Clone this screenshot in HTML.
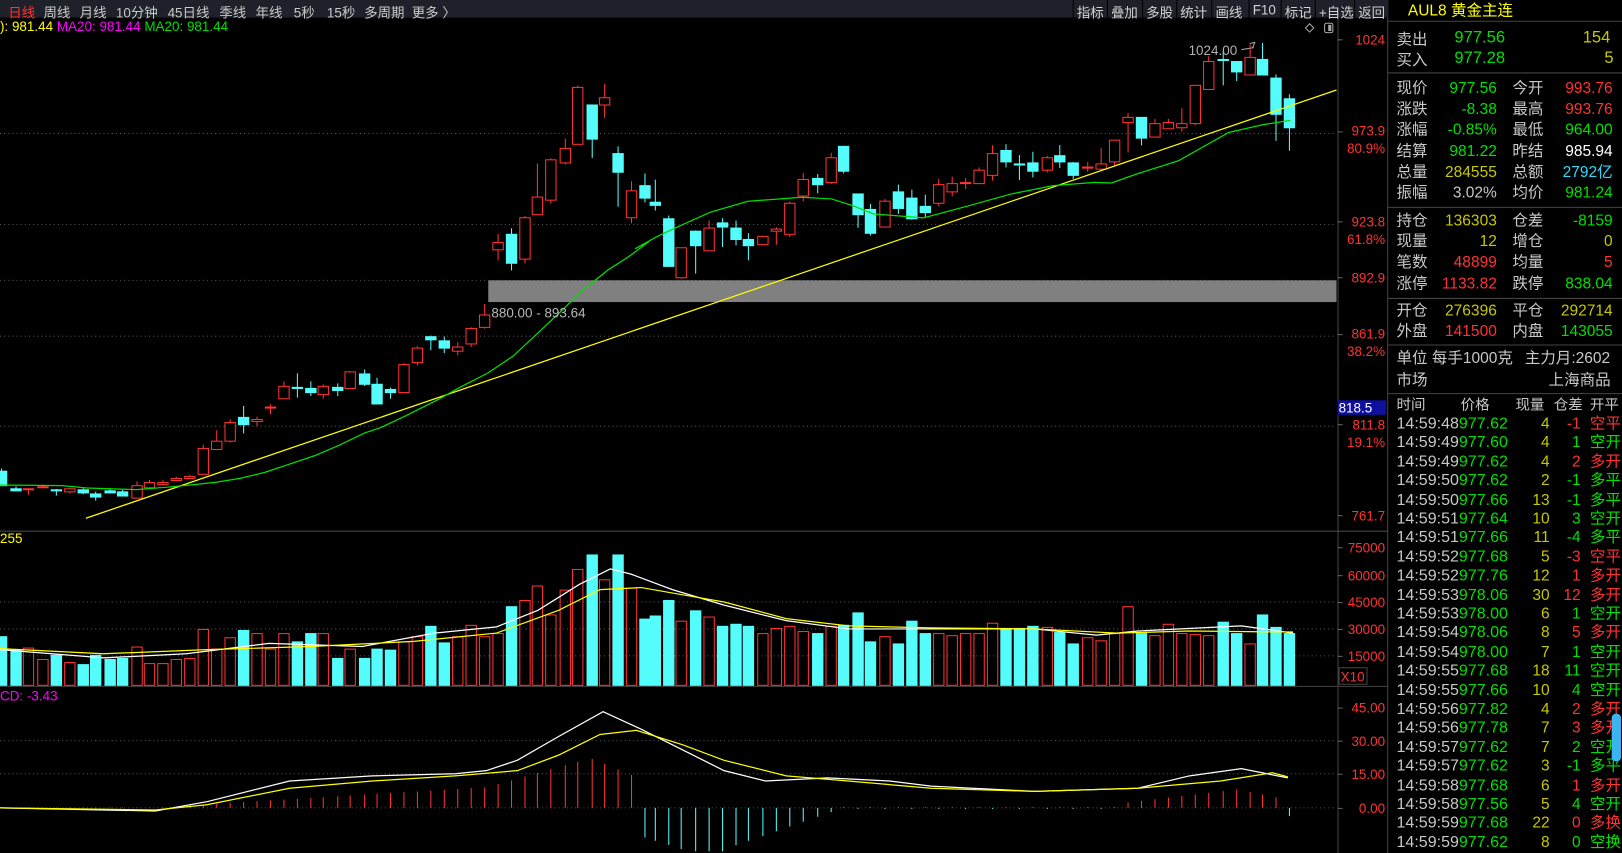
<!DOCTYPE html>
<html><head><meta charset="utf-8">
<style>
*{margin:0;padding:0;box-sizing:border-box}
body{width:1622px;height:853px;background:#000;overflow:hidden;position:relative;font-family:"Liberation Sans","Noto Sans CJK SC",sans-serif;color:#c8c8c8}
#root{position:absolute;left:0;top:0;width:1568px;height:825px;transform:scale(1.03444);transform-origin:0 0}
.t{position:absolute;white-space:nowrap;line-height:1}
#top{position:absolute;left:0;top:0;width:1342px;height:17px;background:#1e2129}
.tb{position:absolute;top:2px;font-size:13px;color:#c8c8c8;white-space:nowrap}
.btn{position:absolute;top:0;height:17px;font-size:13px;color:#d0d0d0;padding:2px 3px 0;border-left:1px solid #000}
.rp{font-size:15px}
.l{color:#c8c8c8}
.r{color:#ff3232}.g{color:#00e000}.y{color:#c8c800}.w{color:#fff}.c{color:#2fd8f8}
.ax{position:absolute;font-size:13px;color:#ff3232;text-align:right;width:46px;left:1293px;line-height:1}
</style></head><body>
<div id="root">
<svg id="s" width="1568" height="825" style="position:absolute;left:0;top:0"></svg>

<div id="top">
<div class="tb" style="left:8px;color:#ff3232">日线</div>
<div class="tb" style="left:42px">周线</div>
<div class="tb" style="left:77px">月线</div>
<div class="tb" style="left:112px">10分钟</div>
<div class="tb" style="left:162px">45日线</div>
<div class="tb" style="left:212px">季线</div>
<div class="tb" style="left:247px">年线</div>
<div class="tb" style="left:284px">5秒</div>
<div class="tb" style="left:316px">15秒</div>
<div class="tb" style="left:352px">多周期</div>
<div class="tb" style="left:398px">更多 〉</div>
<div class="btn" style="left:1037px">指标</div>
<div class="btn" style="left:1070px">叠加</div>
<div class="btn" style="left:1104px">多股</div>
<div class="btn" style="left:1137px">统计</div>
<div class="btn" style="left:1171px">画线</div>
<div class="btn" style="left:1207px">F10</div>
<div class="btn" style="left:1238px">标记</div>
<div class="btn" style="left:1271px">+自选</div>
<div class="btn" style="left:1309px">返回</div>
</div>
<div class="t" style="left:1361px;top:3px;font-size:15px;color:#ffff00">AUL8 黄金主连</div>

<div class="t" style="left:0;top:19px;font-size:13px"><span style="color:#ffff00">): 981.44</span> <span style="color:#ff00ff">MA20: 981.44</span> <span style="color:#00e000">MA20: 981.44</span></div>
<div class="t" style="left:1149px;top:42px;font-size:13px;color:#b0b0b0">1024.00</div>
<div class="t" style="left:475px;top:296px;font-size:13px;color:#b8b8b8">880.00 - 893.64</div>
<div class="t" style="left:0;top:514px;font-size:13px;color:#ffff00">255</div>
<div class="t" style="left:0;top:666px;font-size:13px;color:#ff00ff">CD: -3.43</div>

<div class="ax" style="top:32px">1024</div>
<div class="ax" style="top:120px">973.9</div>
<div class="ax" style="top:137px">80.9%</div>
<div class="ax" style="top:208px">923.8</div>
<div class="ax" style="top:225px">61.8%</div>
<div class="ax" style="top:262px">892.9</div>
<div class="ax" style="top:316px">861.9</div>
<div class="ax" style="top:333px">38.2%</div>
<div class="t" style="left:1293px;top:387px;width:47px;height:14px;background:#1010a0;color:#fff;font-size:13px;padding:1px 0 0 1px">818.5</div>
<div class="ax" style="top:404px">811.8</div>
<div class="ax" style="top:421px">19.1%</div>
<div class="ax" style="top:492px">761.7</div>
<div class="ax" style="top:523px">75000</div>
<div class="ax" style="top:550px">60000</div>
<div class="ax" style="top:576px">45000</div>
<div class="ax" style="top:602px">30000</div>
<div class="ax" style="top:628px">15000</div>
<div class="t" style="left:1294px;top:645px;width:28px;height:17px;border:1px solid #444;color:#ff3232;font-size:13px;padding:2px 0 0 1px">X10</div>
<div class="ax" style="top:678px">45.00</div>
<div class="ax" style="top:710px">30.00</div>
<div class="ax" style="top:742px">15.00</div>
<div class="ax" style="top:775px">0.00</div>

<div class="rp">
<div class="t l" style="left:1350px;top:31px">卖出</div><div class="t g" style="left:1406px;top:29px;font-size:16px">977.56</div><div class="t y" style="left:1530px;top:29px;font-size:16px">154</div>
<div class="t l" style="left:1350px;top:51px">买入</div><div class="t g" style="left:1406px;top:49px;font-size:16px">977.28</div><div class="t y" style="left:1551px;top:49px;font-size:16px">5</div>
</div>
<div class="rp" id="tbl"></div>
<div style="position:absolute;left:1558px;top:690px;width:9px;height:46px;border-radius:4px;background:#3cb4f0"></div>
</div>

<script>
const S=document.getElementById('s');let h='';
function L(x1,y1,x2,y2,c,d){h+=`<line x1="${x1}" y1="${y1}" x2="${x2}" y2="${y2}" stroke="${c}" stroke-width="1" ${d?'stroke-dasharray="1 3"':''}/>`}
function P(pts,c){h+=`<polyline fill="none" stroke="${c}" stroke-width="1.2" points="${pts.map(p=>p.join(',')).join(' ')}"/>`}
[129,217,271,325,412].forEach(y=>L(0,y,1290,y,'#555',1));
[582,608,634].forEach(y=>L(0,y,1290,y,'#555',1));
[716,748,781].forEach(y=>L(0,y,1290,y,'#555',1));
L(0,513.5,1342,513.5,'#444');L(0,663.5,1342,663.5,'#444');
L(1293.5,17,1293.5,853,'#444');L(1341.5,0,1341.5,853,'#444');
[38,127,214,268,323,410,498,529,556,582,608,634,684,716,748,781].forEach(y=>L(1293,y+0.5,1298,y+0.5,'#666'));
h+='<rect x="472" y="271" width="820" height="21" fill="#808080"/>';
h+='<path d="M1266 23 L1270 27 L1266 31 L1262 27Z" fill="none" stroke="#aaa"/>';
h+='<rect x="1280.5" y="22.5" width="8" height="9" rx="1.5" fill="none" stroke="#aaa"/><rect x="1284" y="24" width="3" height="6" fill="#aaa"/>';
h+='<path d="M1200 48 L1212 46 M1208 42 L1213 41 L1211 46" fill="none" stroke="#aaa"/>';
const A=[[3,1235,1278,1228,1278,'c'],[37,1288,1295,1282,1297,'c'],[68,1289,1292,1289,1307,'r'],[102,1281,1286,1276,1288,'r'],[134,1290,1295,1290,1310,'c'],[167,1288,1297,1288,1303,'r'],[199,1290,1300,1288,1306,'c'],[231,1302,1312,1298,1325,'c'],[264,1293,1300,1288,1303,'c'],[296,1296,1310,1293,1312,'c'],[329,1279,1315,1267,1315,'r'],[361,1270,1285,1263,1287,'r'],[393,1270,1274,1262,1276,'r'],[426,1258,1264,1254,1266,'r'],[457,1249,1258,1247,1260,'r'],[490,1165,1243,1157,1245,'r'],[522,1144,1168,1113,1170,'r'],[556,1087,1145,1080,1150,'r'],[588,1072,1094,1040,1123,'c'],[619,1080,1084,1072,1102,'r'],[652,1042,1046,1035,1065,'r'],[684,979,1018,966,1020,'r'],[717,982,984,942,1015,'c'],[749,985,998,966,1010,'c'],[781,979,1005,975,1018,'r'],[814,982,991,972,1010,'c'],[846,937,985,935,987,'r'],[879,942,973,930,980,'c'],[911,972,1033,955,1033,'c'],[942,990,997,985,1018,'c'],[976,913,997,911,999,'r'],[1007,865,907,860,918,'r'],[1041,831,838,828,872,'c'],[1073,841,865,831,881,'c'],[1104,862,873,848,887,'r'],[1137,805,853,803,863,'r'],[1169,764,801,733,807,'r'],[1202,545,568,522,602,'r'],[1234,522,610,505,632,'c'],[1267,472,595,468,610,'r'],[1298,409,463,310,463,'r'],[1330,296,418,294,431,'r'],[1364,263,307,235,313,'r'],[1395,79,250,75,250,'r'],[1429,132,236,132,293,'c'],[1460,109,132,70,173,'r'],[1492,280,335,258,440,'c'],[1526,392,472,363,490,'r'],[1557,375,412,340,427,'c']];
const B=[[47,513,524,447,540,'c'],[78,564,706,555,708,'c'],[110,651,740,651,745,'r'],[143,602,645,600,730,'c'],[175,592,659,570,662,'r'],[208,576,587,563,650,'c'],[240,591,626,570,645,'c'],[271,627,644,608,690,'c'],[304,616,640,616,645,'r'],[336,594,602,590,643,'r'],[369,516,610,513,620,'r'],[401,444,494,427,512,'r'],[435,441,461,430,488,'c'],[467,378,455,366,460,'r'],[498,345,419,345,428,'c'],[532,489,551,489,592,'c'],[563,534,608,520,615,'c'],[597,511,589,505,591,'r'],[628,483,533,462,550,'c'],[660,501,562,477,568,'c'],[693,525,545,492,560,'c'],[725,460,518,444,527,'r'],[758,457,482,438,497,'r'],[790,454,458,442,475,'r'],[821,418,458,410,460,'r'],[855,367,431,343,450,'r'],[886,357,392,340,410,'c'],[919,397,401,373,448,'c'],[951,396,419,363,440,'c'],[986,378,416,375,425,'r'],[1016,372,392,343,412,'c'],[1047,396,431,394,445,'c'],[1081,406,410,394,423,'r'],[1113,397,415,351,418,'r'],[1147,327,392,327,405,'r'],[1178,259,274,246,365,'r'],[1211,258,320,258,344,'c'],[1243,277,318,264,320,'r'],[1275,273,292,264,294,'r'],[1308,277,290,232,302,'r'],[1340,162,277,162,283,'r'],[1371,90,173,75,176,'r'],[1405,84,87,60,163,'c'],[1437,90,120,90,150,'c'],[1470,78,131,40,131,'r'],[1500,84,129,35,133,'c'],[1533,141,248,130,330,'c'],[1565,201,290,190,360,'c']];
const C=[];
A.forEach(a=>C.push([a[0]*0.4,a[1]*0.321+58.6,a[2]*0.321+58.6,a[3]*0.321+58.6,a[4]*0.321+58.6,a[5]]));
B.forEach(a=>C.push([a[0]*0.404+614,a[1]*0.321+30.2,a[2]*0.321+30.2,a[3]*0.321+30.2,a[4]*0.321+30.2,a[5]]));
const R='#ff3232',CY='#54fcfc';
C.forEach(c=>{let x=Math.round(c[0]),col=c[5]=='r'?R:CY;let t=Math.round(c[1]),b=Math.round(c[2]);if(b-t<1)b=t+1;
 L(x+0.5,c[3],x+0.5,c[4],col);
 if(c[5]=='r'){h+=`<rect x="${x-4.5}" y="${t+0.5}" width="10" height="${b-t}" fill="#000" stroke="${R}"/>`}
 else h+=`<rect x="${x-5}" y="${t}" width="11" height="${b-t+1}" fill="${CY}"/>`});
P([[83,501],[1292,87]],'#ffff00');
const G7=[[0,1278],[150,1280],[210,1287],[330,1292],[400,1285],[460,1278],[520,1270],[580,1258],[640,1240],[700,1215],[760,1190],[820,1158],[880,1122],[920,1105],[980,1070],[1060,1020],[1110,985],[1180,940],[1240,890],[1300,820],[1360,750],[1400,700],[1440,660],[1470,630],[1520,590],[1568,545]].map(p=>[p[0]*0.4,p[1]*0.321+58.6]);
const G8=[[0,655],[50,620],[100,590],[180,545],[270,512],[400,500],[470,505],[520,525],[570,550],[690,562],[800,525],[900,490],[1000,465],[1100,455],[1140,457],[1200,430],[1300,390],[1420,305],[1500,282],[1568,268]].map(p=>[p[0]*0.404+614,p[1]*0.321+30.2]);
P(G7.concat(G8),'#00e000');
const V=[615,628,626,637,633,640,642,633,637,636,625,641,641,637,636,608,627,616,609,612,627,612,620,612,612,636,627,636,627,628,620,615,605,621,615,604,615,612,586,580,566,594,570,550,536,560,536,568,598,595,580,600,590,596,605,603,605,612,607,605,610,612,605,604,592,620,615,622,600,612,612,614,612,612,602,607,607,605,606,611,622,616,619,612,586,612,614,603,612,613,614,601,612,622,594,606,612];
C.forEach((c,i)=>{let x=Math.round(c[0]),t=V[i]||615;if(c[5]=='r')h+=`<rect x="${x-4.5}" y="${t+0.5}" width="10" height="${662-t}" fill="none" stroke="${R}"/>`;else h+=`<rect x="${x-5}" y="${t}" width="11" height="${663-t}" fill="${CY}"/>`});
P([[0,628],[100,636],[180,632],[260,622],[350,625],[420,612],[480,606],[520,590],[560,565],[590,550],[610,555],[650,570],[700,585],[760,600],[820,608],[900,608],[1000,608],[1060,614],[1100,610],[1200,605],[1250,612]],'#ffffff');
P([[0,627],[100,632],[200,628],[300,625],[400,620],[480,612],[540,590],[580,570],[620,568],[660,575],[700,582],[760,598],[820,605],[900,607],[1000,608],[1080,612],[1150,610],[1250,611]],'#ffff00');
function hv(x){if(x<175)return 0.5;if(x<470)return 2+(x-175)/295*18;if(x<570)return 20+(x-470)*0.28;if(x<612)return 48-(x-570)*0.4;
 if(x<665)return -25-(x-612)*0.32;if(x<700)return -42;if(x<810)return -40+(x-700)*0.35;if(x<1080)return (x%26<13)?1:-1;if(x<1195)return 4+(x-1080)*0.12;if(x<1240)return 18-(x-1195)*0.2;return -8}
C.forEach(c=>{let x=Math.round(c[0])+0.5,v=hv(c[0]);L(x,781,x,781-v,v>=0?R:CY)});
P([[0,781],[150,784],[200,775],[280,755],[360,750],[440,748],[470,745],[500,735],[540,712],[583,688],[620,705],[660,725],[700,745],[740,755],[800,752],[860,755],[900,760],[1000,765],[1100,762],[1150,750],[1200,743],[1245,752]],'#ffffff');
P([[0,781],[150,783],[200,778],[280,762],[360,755],[440,750],[500,745],[540,730],[580,710],[615,706],[660,720],[700,735],[760,750],[820,755],[900,762],[1000,765],[1100,762],[1180,755],[1230,747],[1245,751]],'#ffff00');
[20,70,200,288,333,380].forEach(y=>L(1342,y+0.5,1568,y+0.5,'#444'));
S.innerHTML=h;

const rows=[
[78,'现价','977.56','g','今开','993.76','r'],[98,'涨跌','-8.38','g','最高','993.76','r'],[118,'涨幅','-0.85%','g','最低','964.00','g'],[139,'结算','981.22','g','昨结','985.94','w'],[159,'总量','284555','y','总额','2792亿','c'],[179,'振幅','3.02%','l','均价','981.24','g'],
[206,'持仓','136303','y','仓差','-8159','g'],[226,'现量','12','y','增仓','0','y'],[246,'笔数','48899','r','均量','5','r'],[267,'涨停','1133.82','r','跌停','838.04','g'],
[293,'开仓','276396','y','平仓','292714','y'],[313,'外盘','141500','r','内盘','143055','g']];
let o='';
rows.forEach(r=>{o+=`<div class="t l" style="left:1350px;top:${r[0]}px">${r[1]}</div><div class="t ${r[3]}" style="left:1357px;width:90px;text-align:right;top:${r[0]}px">${r[2]}</div><div class="t l" style="left:1462px;top:${r[0]}px">${r[4]}</div><div class="t ${r[6]}" style="left:1480px;width:79px;text-align:right;top:${r[0]}px">${r[5]}</div>`});
o+=`<div class="t l" style="left:1350px;top:339px">单位 每手1000克</div><div class="t l" style="left:1474px;top:339px">主力月:2602</div>`;
o+=`<div class="t l" style="left:1350px;top:360px">市场</div><div class="t l" style="left:1497px;top:360px">上海商品</div>`;
o+=`<div class="t l" style="left:1350px;top:384px;font-size:14px">时间</div><div class="t l" style="left:1412px;top:384px;font-size:14px">价格</div><div class="t l" style="left:1465px;top:384px;font-size:14px">现量</div><div class="t l" style="left:1502px;top:384px;font-size:14px">仓差</div><div class="t l" style="left:1537px;top:384px;font-size:14px">开平</div>`;
const T=[['48','977.62',4,-1,'空平','r'],['49','977.60',4,1,'空开','g'],['49','977.62',4,2,'多开','r'],['50','977.62',2,-1,'多平','g'],['50','977.66',13,-1,'多平','g'],['51','977.64',10,3,'空开','g'],['51','977.66',11,-4,'多平','g'],['52','977.68',5,-3,'空平','r'],['52','977.76',12,1,'多开','r'],['53','978.06',30,12,'多开','r'],['53','978.00',6,1,'空开','g'],['54','978.06',8,5,'多开','r'],['54','978.00',7,1,'空开','g'],['55','977.68',18,11,'空开','g'],['55','977.66',10,4,'空开','g'],['56','977.82',4,2,'多开','r'],['56','977.78',7,3,'多开','r'],['57','977.62',7,2,'空开','g'],['57','977.62',3,-1,'多平','g'],['58','977.68',6,1,'多开','r'],['58','977.56',5,4,'空开','g'],['59','977.68',22,0,'多换','r'],['59','977.62',8,0,'空换','g']];
T.forEach((r,i)=>{let y=Math.round(402+i*18.4);o+=`<div class="t" style="left:1350px;top:${y}px;font-size:15.5px"><span class="l">14:59:${r[0]}</span><span class="g">${r[1]}</span></div><div class="t y" style="left:1460px;width:38px;text-align:right;top:${y}px">${r[2]}</div><div class="t ${r[5]}" style="left:1490px;width:38px;text-align:right;top:${y}px">${r[3]}</div><div class="t ${r[5]}" style="left:1537px;top:${y}px">${r[4]}</div>`});
document.getElementById('tbl').innerHTML=o;
</script>
</body></html>
